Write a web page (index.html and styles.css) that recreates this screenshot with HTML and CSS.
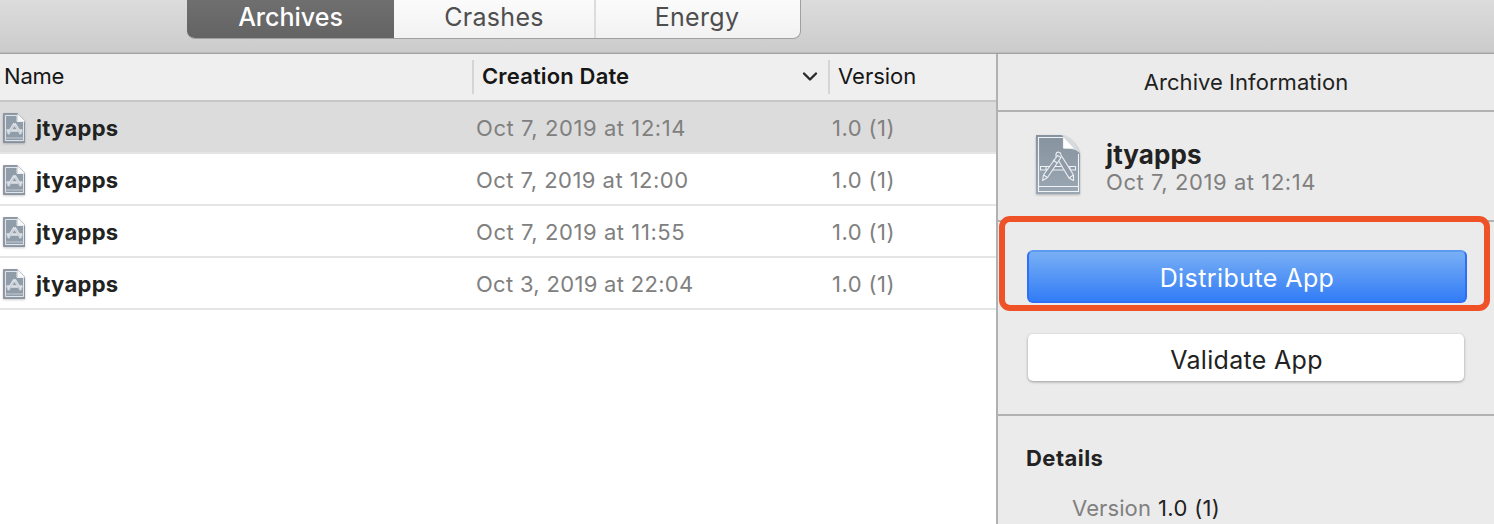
FILE: index.html
```html
<!DOCTYPE html>
<html lang="en">
<head>
<meta charset="utf-8">
<title>Archives</title>
<link rel="stylesheet" href="styles.css">
</head>
<body>
<svg class="defs" width="0" height="0" aria-hidden="true">
  <defs>
    <linearGradient id="paper" x1="0" y1="0" x2="0" y2="1">
      <stop offset="0" stop-color="#87929f"/>
      <stop offset="1" stop-color="#9ba7b3"/>
    </linearGradient>
    <symbol id="doc-small" viewBox="0 0 24 32">
      <path d="M2.500 1.500H16.500L24 9V30.500H2.500Z" fill="#919ca9" stroke="#7f8996" stroke-width=".8"/>
      <path d="M4.500 3.500H16V9.500H22.500V28.500H4.500Z" fill="none" stroke="#dfe4ea" stroke-width="1"/>
      <path d="M16.500 1.500V9.500H24.500Z" fill="#f7f8f9"/>
      <path d="M4.500 26H22.500" stroke="#c5ccd4" stroke-width="1"/>
      <path d="M13.500 11.500L7 22M13.500 11.500L20 22M5.500 18.500H21.500" fill="none" stroke="#dbe0e6" stroke-width="2.600"/>
      <path d="M12.500 13.500L8 21.500M14.500 13.500L19 21.500" fill="none" stroke="#b0b9c3" stroke-width=".6"/>
    </symbol>
    <symbol id="doc-large" viewBox="0 0 48 62">
      <path d="M2 1H27C35 2 44 11 46 20V60H2Z" fill="url(#paper)"/>
      <path d="M29.500 3.500H4.500V57.500H44.500V20M4.500 52.500H44.500M29.500 3.500V14.500" fill="none" stroke="#f0f3f5" stroke-width="1.100"/>
      <path d="M28 1C31 4 30 9 30 14.500C37 14.500 43 15 46 20C44 11 36 2 28 1Z" fill="#d8dbde"/>
      <path d="M30 4V14.500H40Z" fill="#fff"/>
      <g fill="#8f9ba8" stroke="#eef1f4" stroke-width="1.100" stroke-linejoin="round">
        <path d="M6.500 32.500H41.500V36H6.500Z"/>
        <path d="M12 32.500V36M36 32.500V36" fill="none"/>
        <path d="M22 20C23 17 27 18 27 21L39.500 41L39.500 46.500L35 44L22 22.500Z"/>
        <path d="M23.500 21.500L27 23.500L13.500 43.500L8.500 46.500L9.500 41Z"/>
        <path d="M19 26L23 29M9.500 41L13.500 43.500M35 44L39.500 41" fill="none"/>
      </g>
    </symbol>
  </defs>
</svg>
<div class="window">
  <header class="toolbar">
    <nav class="segments">
      <div class="segment active"><span>Archives</span></div>
      <div class="segment crashes"><span>Crashes</span></div>
      <div class="segment energy"><span>Energy</span></div>
    </nav>
  </header>
  <main class="content">
    <section class="list">
      <div class="row head">
        <div class="name"><span>Name</span></div>
        <div class="date"><span>Creation Date</span><svg class="chevron" width="16" height="12" viewBox="0 0 16 12"><path d="M2 2.500L8 8.500L14 2.500" fill="none" stroke="#2a2a2a" stroke-width="2.400" stroke-linecap="round" stroke-linejoin="round"/></svg></div>
        <div class="version"><span>Version</span></div>
      </div>
      <div class="row item selected"><div class="name"><svg class="icon"><use href="#doc-small"/></svg><span>jtyapps</span></div><div class="date wide"><span>Oct 7, 2019 at 12:14</span></div><div class="version"><span>1.0 (1)</span></div></div>
      <div class="row item"><div class="name"><svg class="icon"><use href="#doc-small"/></svg><span>jtyapps</span></div><div class="date"><span>Oct 7, 2019 at 12:00</span></div><div class="version"><span>1.0 (1)</span></div></div>
      <div class="row item"><div class="name"><svg class="icon"><use href="#doc-small"/></svg><span>jtyapps</span></div><div class="date wide"><span>Oct 7, 2019 at 11:55</span></div><div class="version"><span>1.0 (1)</span></div></div>
      <div class="row item"><div class="name"><svg class="icon"><use href="#doc-small"/></svg><span>jtyapps</span></div><div class="date narrow"><span>Oct 3, 2019 at 22:04</span></div><div class="version"><span>1.0 (1)</span></div></div>
    </section>
    <aside class="info">
      <h2 class="info-title">Archive Information</h2>
      <div class="summary">
        <svg class="icon-large"><use href="#doc-large"/></svg>
        <div class="summary-text"><strong>jtyapps</strong><span>Oct 7, 2019 at 12:14</span></div>
      </div>
      <div class="actions">
        <button class="button primary"><span>Distribute App</span></button>
        <button class="button"><span>Validate App</span></button>
        <div class="highlight"></div>
      </div>
      <div class="details">
        <h3>Details</h3>
        <p><span class="label">Version</span><span class="value">1.0 (1)</span></p>
      </div>
    </aside>
  </main>
</div>
</body>
</html>
```
FILE: styles.css
```css
* { box-sizing: border-box; }
body { margin: 0; font-family: Inter, "Liberation Sans", sans-serif; font-size: 22px; color: #222; }
.defs { position: absolute; }
.window { width: 1494px; height: 524px; display: flex; flex-direction: column; overflow: hidden; background: #fff; }
span, strong { white-space: nowrap; }

.toolbar { height: 54px; flex: none; padding-left: 187px; background: linear-gradient(#dcdcdc, #cbcbcb); border-bottom: 1px solid #a2a2a2; box-shadow: inset 0 -1px #bcbcbc; }
.segments { display: flex; width: 614px; height: 39px; border-radius: 0 0 8px 8px; overflow: hidden; background: linear-gradient(#fbfbfb, #f2f2f2); border: solid #a0a0a0; border-width: 0 1px 1px 0; }
.segment { display: flex; justify-content: center; height: 39px; padding-top: 1px; line-height: 32px; font-size: 25px; letter-spacing: .3px; color: #4e4e4e; }
.active { width: 207px; background: linear-gradient(#6f6f6f, #636363); color: #fff; font-weight: 500; letter-spacing: 0; }
.crashes { width: 202px; border-right: 2px solid #dcdcdc; }
.energy { width: 204px; padding-right: 2px; }

.content { display: flex; flex: 1; min-height: 0; }
.list { width: 998px; flex: none; border-right: 2px solid #b1b1b1; }
.row { display: grid; grid-template-columns: 472px 356px 1fr; height: 52px; border-bottom: 2px solid #e5e5e5; }
.row > div { display: flex; align-items: center; }
.head { height: 48px; background: #efefef; border-bottom-color: #c6c6c6; color: #161616; padding: 6px 0; }
.head > div > span { padding-bottom: 2px; }
.head .name { padding-left: 4px; letter-spacing: -.2px; }
.head .date, .head .version { height: 34px; border-left: 2px solid #d5d5d5; padding-left: 8px; }
.head .date { font-weight: 600; letter-spacing: .15px; }
.chevron { margin-left: auto; margin-right: 10px; }
.item .name { padding-left: 1px; gap: 11px; font-weight: 700; letter-spacing: .3px; }
.item .date { padding-left: 4px; color: #808080; letter-spacing: .46px; }
.item .wide { letter-spacing: .57px; }
.item .narrow { letter-spacing: .3px; }
.item .version { padding-left: 4px; color: #808080; letter-spacing: .45px; }
.item > div > span { padding-top: 2px; }
.selected { background: #dcdcdc; }
.icon { width: 24px; height: 32px; margin-top: 1px; filter: drop-shadow(0 1px 1px rgba(0,0,0,.2)); }

.info { width: 496px; background: #ebebeb; }
.info-title { margin: 0; height: 58px; border-bottom: 2px solid #b1b1b1; font-size: 22px; font-weight: 400; line-height: 57px; text-align: center; letter-spacing: .05px; }
.summary { display: flex; height: 110px; border-bottom: 2px solid #b1b1b1; padding: 22px 0 0 36px; gap: 24px; }
.icon-large { width: 48px; height: 62px; filter: drop-shadow(0 1px 1px rgba(0,0,0,.25)); }
.summary-text { display: flex; flex-direction: column; padding-top: 7px; }
.summary-text strong { font-size: 26px; line-height: 28px; letter-spacing: .1px; }
.summary-text span { line-height: 27px; color: #808080; letter-spacing: .57px; }
.actions { position: relative; height: 194px; border-bottom: 2px solid #b1b1b1; padding: 28px 27px 0 29px; }
.button { display: flex; justify-content: center; align-items: center; width: 436px; height: 47px; margin: 31px 0 0 1px; padding: 5px 0 0 1px; border: 0; border-radius: 5px; background: #fff; box-shadow: 0 1px 3px rgba(0,0,0,.35); font: 400 25px Inter, "Liberation Sans", sans-serif; letter-spacing: .32px; color: #222; }
.primary { width: 440px; height: 53px; margin: 0; padding: 2px 0 0; border: 2px solid #2e6ff5; border-top-color: #5b9bf1; border-radius: 6px; background: linear-gradient(#7bb1f5, #2f7af6) border-box; box-shadow: none; color: #fff; letter-spacing: .42px; }
/* Callout frame around the primary action */
.highlight { position: absolute; left: 1px; top: -6.5px; width: 491px; height: 95px; border: 6px solid #f05227; border-radius: 11px; }
.details { padding-left: 28px; }
.details h3 { margin: 0; padding-top: 27px; font-size: 22px; line-height: 30px; font-weight: 700; letter-spacing: .45px; }
.details p { display: flex; margin: 20px 0 0 46px; gap: 7px; line-height: 30px; }
.label { color: #808080; letter-spacing: .1px; }
.value { letter-spacing: .35px; }
```
